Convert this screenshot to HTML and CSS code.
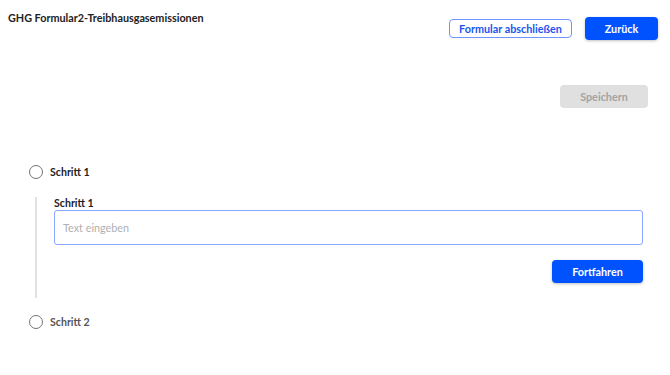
FILE: index.html
```html
<!DOCTYPE html>
<html>
<head>
  <title>GHG Formular2</title>
  <link rel="stylesheet" href="styles.css">
</head>
<body>
  <div class="header">
    <h1 class="title">GHG Formular2-Treibhausgasemissionen</h1>
    <div class="actions">
      <button class="btn-outline">Formular abschließen</button>
      <button class="btn-primary btn-back">Zurück</button>
    </div>
  </div>

  <div class="toolbar">
    <button class="btn-disabled" disabled>Speichern</button>
  </div>

  <div class="stepper">
    <div class="step">
      <span class="step-icon"></span>
      <span class="step-label active">Schritt 1</span>
    </div>
    <div class="step-content">
      <label class="field-label">Schritt 1</label>
      <input type="text" class="field-input" placeholder="Text eingeben">
      <div class="step-actions">
        <button class="btn-primary">Fortfahren</button>
      </div>
    </div>
    <div class="step">
      <span class="step-icon"></span>
      <span class="step-label">Schritt 2</span>
    </div>
  </div>
</body>
</html>
```

FILE: styles.css
```css
body {
  margin: 0;
  font-family: "Lato", "Open Sans", sans-serif;
  color: #222;
  background: white;
}
.header {
  display: flex;
  justify-content: space-between;
  align-items: flex-start;
  padding: 10px 12px 0 8px;
}
.title {
  margin: 0;
  font-size: 10.8px;
  font-weight: 700;
  line-height: 15px;
}
.actions {
  display: flex;
  align-items: center;
  gap: 13px;
  margin-top: 7px;
}
button {
  font-family: inherit;
  font-weight: 700;
  font-size: 10.8px;
  border-radius: 4px;
  cursor: pointer;
}
.btn-outline {
  height: 19px;
  width: 123px;
  padding: 0;
  background: white;
  color: #1a55f0;
  border: 1px solid #6c95ff;
}
.btn-primary {
  height: 23px;
  width: 91px;
  padding: 0;
  background: #0052ff;
  color: white;
  border: none;
  box-shadow: 0 1px 3px rgba(0,0,0,0.25);
}
.btn-back {
  width: 73px;
}
.toolbar {
  display: flex;
  justify-content: flex-end;
  padding: 45px 22px 0 0;
}
.btn-disabled {
  height: 23px;
  width: 88px;
  background: #e0e0e0;
  color: #a3a3a3;
  border: none;
  cursor: default;
}
.stepper {
  padding: 56px 27px 0 29px;
}
.step {
  display: flex;
  align-items: center;
  gap: 7px;
  height: 16px;
}
.step-icon {
  width: 12px;
  height: 12px;
  border: 1.5px solid #737373;
  border-radius: 50%;
}
.step-label {
  font-size: 10.6px;
  font-weight: 700;
  color: #555;
}
.step-label.active {
  color: #222;
}
.step-content {
  margin: 17px 0 16px 6px;
  padding: 0 0 15px 17px;
  border-left: 2px solid #e2e2e2;
}
.field-label {
  display: block;
  font-size: 10.6px;
  font-weight: 700;
  line-height: 12px;
  margin-bottom: 1px;
}
.field-input {
  display: block;
  box-sizing: border-box;
  width: 100%;
  height: 35px;
  padding: 0 8px;
  font-family: inherit;
  font-size: 10.8px;
  border: 1px solid #8aa8ff;
  border-radius: 3px;
  outline: none;
}
.field-input::placeholder {
  color: #b0b0b0;
}
.step-actions {
  display: flex;
  justify-content: flex-end;
  margin-top: 15px;
}
```
